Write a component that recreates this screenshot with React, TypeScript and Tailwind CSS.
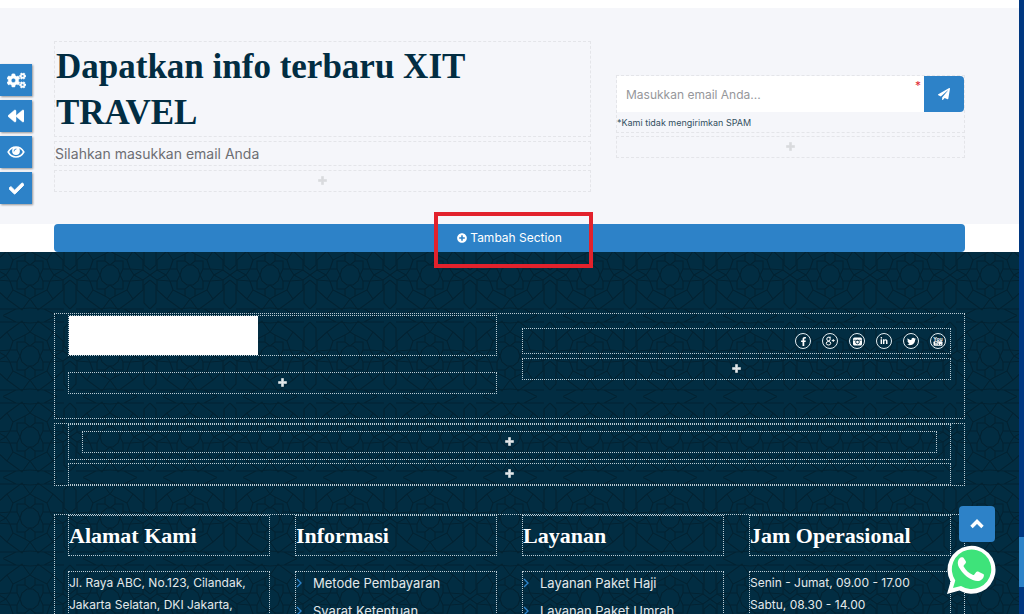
import type { ReactNode } from "react";
import {
  FaBackward,
  FaCheck,
  FaCogs,
  FaFacebookF,
  FaLinkedinIn,
  FaPaperPlane,
  FaPlusCircle,
  FaTwitter,
} from "react-icons/fa";

const tools = [
  { label: "Pengaturan", icon: <FaCogs size={19} stroke="currentColor" strokeWidth={14} /> },
  { label: "Kembali", icon: <FaBackward size={16} stroke="currentColor" strokeWidth={14} /> },
  { label: "Pratinjau", icon: <EyeIcon /> },
  { label: "Selesai", icon: <FaCheck size={15} stroke="currentColor" strokeWidth={30} /> },
];

const socials = [
  { label: "Facebook", icon: <FaFacebookF size={9} /> },
  { label: "Google Plus", icon: <GooglePlusIcon /> },
  { label: "Instagram", icon: <CameraIcon /> },
  { label: "LinkedIn", icon: <FaLinkedinIn size={8} /> },
  { label: "Twitter", icon: <FaTwitter size={9} /> },
  { label: "YouTube", icon: <TubeIcon /> },
];

const columns = [
  {
    title: "Alamat Kami",
    lines: ["Jl. Raya ABC, No.123, Cilandak,", "Jakarta Selatan, DKI Jakarta,"],
  },
  { title: "Informasi", links: ["Metode Pembayaran", "Syarat Ketentuan"] },
  { title: "Layanan", links: ["Layanan Paket Haji", "Layanan Paket Umrah"] },
  {
    title: "Jam Operasional",
    lines: ["Senin - Jumat, 09.00 - 17.00", "Sabtu, 08.30 - 14.00"],
  },
];

function PlusIcon() {
  return (
    <svg width="9" height="9" viewBox="0 0 9 9" aria-hidden="true">
      <path d="M3.500 .5h2v3h3v2h-3v3h-2v-3h-3v-2h3z" fill="currentColor" stroke="currentColor" strokeWidth=".6" strokeLinejoin="round" />
    </svg>
  );
}

function EyeIcon() {
  return (
    <svg width="18" height="14" viewBox="0 0 18 14" aria-hidden="true">
      <path d="M1.200 7C3 3.800 5.800 2 9 2s6 1.800 7.800 5C15 10.200 12.200 12 9 12S3 10.200 1.200 7Z" fill="none" stroke="currentColor" strokeWidth="1.600" />
      <circle cx="9" cy="6" r="3.900" fill="currentColor" />
      <path d="M7 6a2 2 0 0 1 2-2" fill="none" stroke="#2d82c8" strokeWidth=".9" strokeLinecap="round" />
    </svg>
  );
}

function ChevronIcon() {
  return (
    <svg width="16" height="12" viewBox="0 0 16 12" aria-hidden="true">
      <path d="M2.500 9 8 3.500 13.500 9" fill="none" stroke="currentColor" strokeWidth="3.400" />
    </svg>
  );
}

function GooglePlusIcon() {
  return (
    <svg width="12" height="12" viewBox="0 0 24 24" aria-hidden="true">
      <circle cx="9" cy="8" r="3.500" fill="none" stroke="currentColor" strokeWidth="2" />
      <ellipse cx="9" cy="16.500" rx="4.500" ry="3.500" fill="none" stroke="currentColor" strokeWidth="2" />
      <path d="M9 4.500h5M11 11l-2 2M15.500 11h6M18.500 8v6" fill="none" stroke="currentColor" strokeWidth="1.800" />
    </svg>
  );
}

function CameraIcon() {
  return (
    <svg width="9" height="9" viewBox="0 0 18 18" aria-hidden="true">
      <rect x="0" y="1" width="18" height="16" rx="3" fill="currentColor" />
      <path d="M1 6.500h16" stroke="#022d42" strokeWidth="1.400" />
      <circle cx="9" cy="10" r="3.600" fill="none" stroke="#022d42" strokeWidth="1.800" />
    </svg>
  );
}

function TubeIcon() {
  return (
    <svg width="10" height="10" viewBox="0 0 20 20" aria-hidden="true">
      <text x="10" y="9" textAnchor="middle" fontSize="10" fontWeight="700" fill="currentColor">
        You
      </text>
      <rect x="1" y="10.500" width="18" height="9" rx="2" fill="currentColor" />
      <path d="M4 13h4M6 13v4.500M10 13v4h2M14 17h2.500" fill="none" stroke="#022d42" strokeWidth="1.200" />
    </svg>
  );
}

function WhatsappIcon() {
  return (
    <svg width="50" height="50" viewBox="0 0 50 50" aria-hidden="true">
      <path d="M1 49 4.600 36.600A24 24 0 1 1 13.500 45.600Z" fill="#fff" />
      <path d="M7 43 9.300 35.400A19.700 19.700 0 1 1 15 40.900Z" fill="#3ee37a" />
      <path
        d="M18 13.500c-.6-1.200-1.200-1.200-1.800-1.200-1 0-1.900.2-2.700 1.200-.9 1-1.900 2.600-1.700 5.100.2 2.900 2.100 5.700 4.300 8.400 3 3.600 6.400 6.400 10.700 8.100 3.400 1.300 5.800 1.300 7.900.1 2-1.100 3-2.600 3.200-4.500.1-1 0-1.300-.8-1.700l-5-2.400c-.8-.3-1.300-.3-1.900.4l-1.900 2.400c-.5.6-1 .6-1.700.3-3.900-1.700-6.700-4.300-8.800-7.900-.4-.7-.2-1.200.3-1.700l1.500-1.900c.5-.6.5-1.200.2-1.900z"
        fill="#fff"
      />
    </svg>
  );
}

// ornamen bintang, satu kuadran dicerminkan ke empat arah
function FooterPattern() {
  return (
    <svg className="absolute inset-0 size-full" aria-hidden="true">
      <defs>
        <g id="quad" fill="none" stroke="#022232" strokeWidth="1.200">
          <path d="M10 0 8 6 3 10H0" />
          <path d="M10 0 13 6H20L24 0" />
          <path d="M0 10 5 14V21L0 24" />
          <path d="M5 14 13 14 13 6" />
          <path d="M20 6 17 15 23 24M5 21 17 15" />
          <path d="M24 0 33 5V15L23 24 8 35 0 24" />
          <path d="M20 6 33 5 40 0M40 5 34 10V28L40 34" />
          <path d="M0 33 14 34 27 40.500M14 34H34" />
        </g>
        <pattern id="ornament" x="-10" y="-18" width="80" height="81" patternUnits="userSpaceOnUse">
          <use href="#quad" transform="translate(40 41)" />
          <use href="#quad" transform="translate(40 41) scale(-1 1)" />
          <use href="#quad" transform="translate(40 41) scale(1 -1)" />
          <use href="#quad" transform="translate(40 41) scale(-1 -1)" />
        </pattern>
      </defs>
      <rect width="100%" height="100%" fill="url(#ornament)" />
    </svg>
  );
}

function AddRow({ dark = false }: { dark?: boolean }) {
  return (
    <button
      aria-label="Tambah elemen"
      className={`flex h-[22px] w-full items-start justify-center border pt-[5px] ${
        dark ? "border-dotted border-[#b9cbd4] text-[#e4e8ea]" : "border-dashed border-[#e4e5e9] text-[#d9dadd]"
      }`}
    >
      <PlusIcon />
    </button>
  );
}

function Box({ children, className = "" }: { children?: ReactNode; className?: string }) {
  return <div className={`border border-dotted border-[#b9cbd4] ${className}`}>{children}</div>;
}

function Newsletter() {
  return (
    <section className="bg-[#f5f6fa] px-[54px] pt-[33px] pb-8">
      <div className="grid grid-cols-[537fr_349fr] items-start gap-[25px]">
        <div className="flex flex-col gap-1">
          <h2 className="border border-dashed border-[#e4e5e9] pt-0.5 pl-px font-['Liberation_Serif',serif] text-[35px] leading-[46px] font-bold text-[#022d42]">
            Dapatkan info terbaru XIT <br />
            TRAVEL
          </h2>
          <p className="border border-dashed border-[#e4e5e9] text-[14px] leading-[23px] text-[#6d6e73]">
            Silahkan masukkan email Anda
          </p>
          <AddRow />
        </div>
        <div className="flex flex-col gap-[3px] pt-[34px]">
          <form className="border border-dashed border-[#e4e5e9]" onSubmit={(e) => e.preventDefault()}>
            <div className="flex">
              <div className="relative flex-1">
                <input
                  type="email"
                  required
                  aria-label="Email"
                  placeholder="Masukkan email Anda..."
                  className="h-9 w-full bg-white px-[9px] text-[12px] text-[#333] outline-none placeholder:text-[#96979b]"
                />
                <span className="absolute top-0.5 right-[3px] text-[12px] leading-4 text-[#e02b35]">*</span>
              </div>
              <button
                aria-label="Kirim"
                className="flex h-9 w-10 items-center justify-center rounded-r-sm bg-[#2d82c8] text-white"
              >
                <FaPaperPlane size={12} />
              </button>
            </div>
            <p className="pt-0.5 text-[9px] leading-[18px] text-[#33505f]">*Kami tidak mengirimkan SPAM</p>
          </form>
          <AddRow />
        </div>
      </div>
    </section>
  );
}

function Footer() {
  return (
    <footer className="relative flex-1 bg-[#022d42] px-[54px] pt-[61px] text-[#e3e9ec]">
      <FooterPattern />
      <div className="relative">
        <Box className="grid h-[106px] grid-cols-2 items-start gap-[25px] px-[13px] pt-px">
          <div className="flex flex-col gap-4">
            <Box className="h-[41px]">
              <div className="h-full w-[189px] bg-white" />
            </Box>
            <AddRow dark />
          </div>
          <div className="flex flex-col gap-1 pt-[13px]">
            <Box className="flex h-[26px] items-center justify-end gap-[11px] pr-1">
              {socials.map((s) => (
                <a
                  key={s.label}
                  href="#"
                  aria-label={s.label}
                  className="flex size-4 items-center justify-center rounded-full border border-[#e3eef3] text-white"
                >
                  {s.icon}
                </a>
              ))}
            </Box>
            <AddRow dark />
          </div>
        </Box>

        <Box className="mt-1 flex flex-col gap-[3px] px-[13px]">
          <Box className="px-[13px] py-[6px]">
            <AddRow dark />
          </Box>
          <AddRow dark />
        </Box>

        <Box className="mt-7 grid grid-cols-4 items-stretch gap-[25px] px-[13px]">
          {columns.map((col) => (
            <div key={col.title} className="flex flex-col gap-[15px]">
              <Box className="h-[41px]">
                <h3 className="font-['Liberation_Serif',serif] text-[22px] leading-10 font-bold whitespace-nowrap text-white">
                  {col.title}
                </h3>
              </Box>
              <Box className="h-32">
                {col.lines?.map((line) => (
                  <p key={line} className="text-[12px] leading-[22px] whitespace-nowrap">
                    {line}
                  </p>
                ))}
                {col.links && (
                  <ul className="text-[13px]">
                    {col.links.map((link) => (
                      <li key={link}>
                        <a href="#" className="flex h-7 items-start leading-[22px] whitespace-nowrap">
                          <svg width="17" height="22" viewBox="0 0 17 22" aria-hidden="true">
                            <path d="M1 7l4 4-4 4" fill="none" stroke="#2d82c8" strokeWidth="1.400" />
                          </svg>
                          {link}
                        </a>
                      </li>
                    ))}
                  </ul>
                )}
              </Box>
            </div>
          ))}
        </Box>
      </div>
    </footer>
  );
}

export default function App() {
  return (
    <div className="flex h-screen overflow-hidden bg-white font-[Inter,sans-serif]">
      <main className="flex min-w-0 flex-1 flex-col pt-2">
        <Newsletter />
        <div className="relative z-10 mx-[54px]">
          <button className="flex h-7 w-full items-center justify-center gap-[3px] rounded-sm bg-[#2d82c8] text-[12px] text-white">
            <FaPlusCircle size={10} />
            Tambah Section
          </button>
          <div className="pointer-events-none absolute -top-3 left-1/2 -ml-[76px] h-14 w-[159px] border-4 border-[#e2222c]" />
        </div>
        <Footer />
      </main>

      <div className="flex w-[5px] flex-col justify-end bg-[#003780] pb-[27px]">
        <div className="h-[50px] bg-[#2d82c8]" />
      </div>

      <nav className="fixed top-16 left-0 z-20 flex flex-col gap-1">
        {tools.map((t) => (
          <button
            key={t.label}
            aria-label={t.label}
            className="flex size-8 items-center justify-center bg-[#2d82c8] text-white shadow-[1px_1px_2px_rgba(0,0,0,0.4)]"
          >
            {t.icon}
          </button>
        ))}
      </nav>

      <div className="fixed right-7 bottom-[19px] z-20 flex flex-col items-end gap-[3px]">
        <button
          aria-label="Ke atas"
          className="mr-px flex size-9 items-center justify-center rounded-sm bg-[#2d82c8] text-white"
        >
          <ChevronIcon />
        </button>
        <a href="#" aria-label="WhatsApp">
          <WhatsappIcon />
        </a>
      </div>
    </div>
  );
}
